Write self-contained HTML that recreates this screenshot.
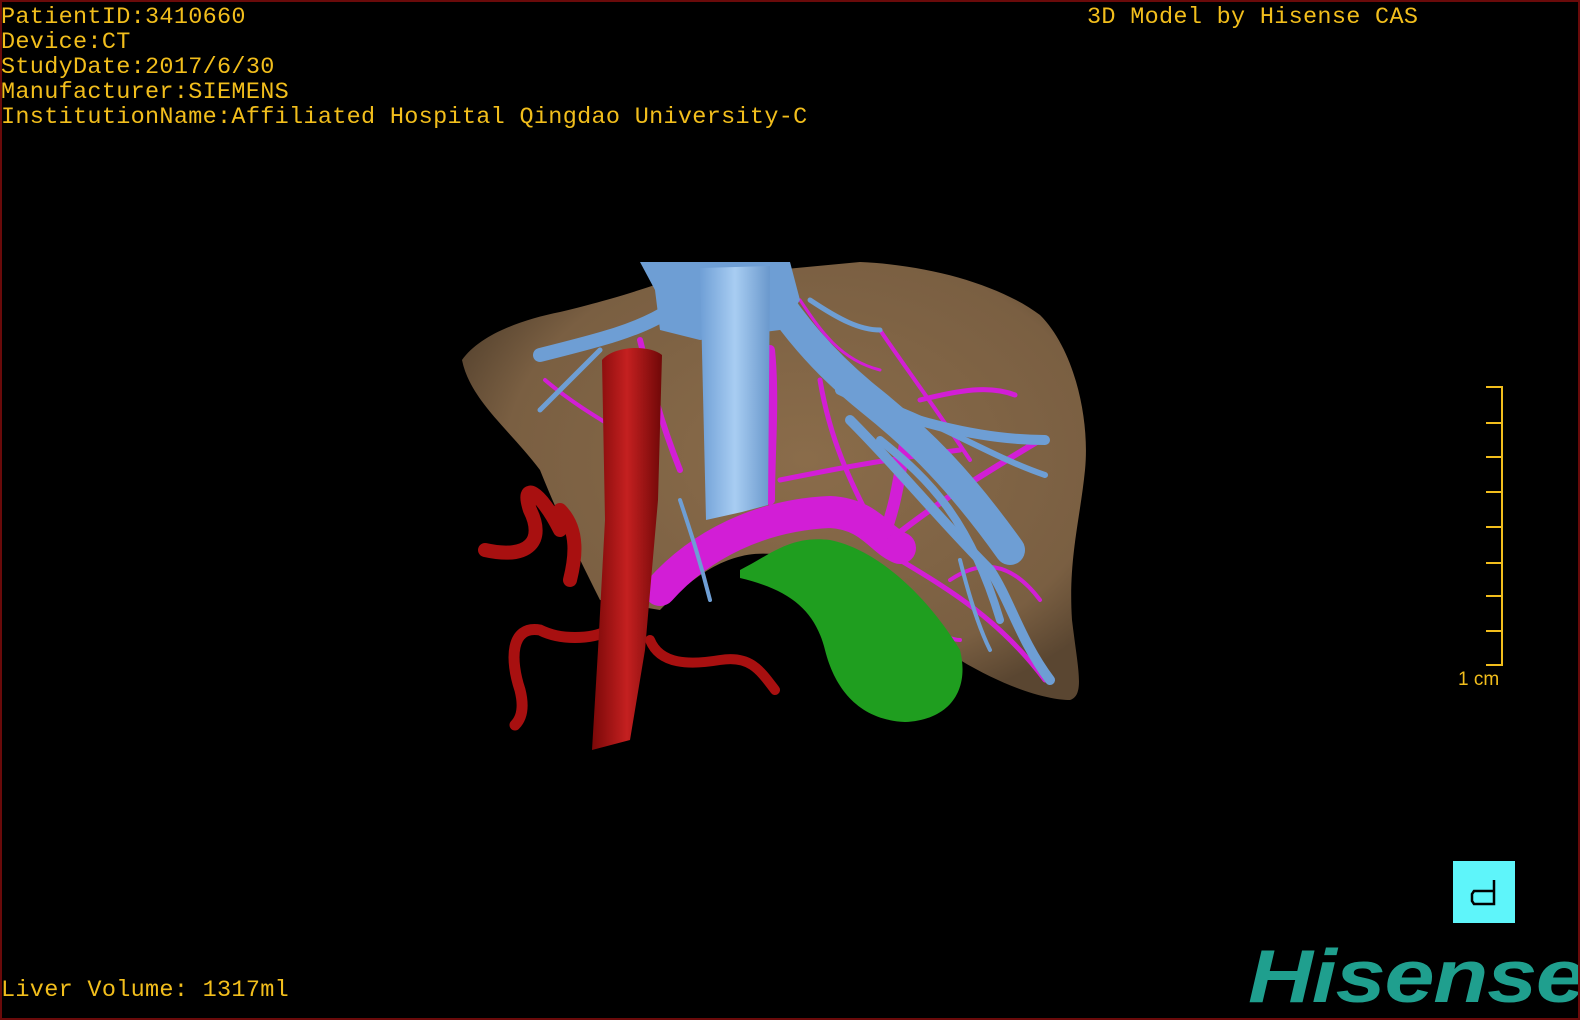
<!DOCTYPE html>
<html><head><meta charset="utf-8"><style>
html,body{margin:0;padding:0;background:#000;}
#f{position:relative;width:1580px;height:1020px;background:#000;overflow:hidden;box-sizing:border-box;border:2px solid #6a0a0a}
.t{position:absolute;font-family:"Liberation Mono",monospace;font-size:23.5px;color:#f2be1c;line-height:25px;white-space:pre;letter-spacing:0.3px}
.logo{position:absolute;left:1246px;top:931px;font-family:"Liberation Sans",sans-serif;font-weight:bold;font-style:italic;font-size:75px;color:#1f9f8e;letter-spacing:-1px;transform:scaleX(1.2);transform-origin:left}
</style></head><body><div id="f">
<div class="t" style="left:-1px;top:3px">PatientID:3410660
Device:CT
StudyDate:2017/6/30
Manufacturer:SIEMENS
InstitutionName:Affiliated Hospital Qingdao University-C</div>
<div class="t" style="left:1085px;top:3px">3D Model by Hisense CAS</div>
<div class="t" style="left:-1px;top:976px">Liver Volume: 1317ml</div>
<svg width="1580" height="1020" style="position:absolute;left:-2px;top:-2px">
<defs>
<radialGradient id="lv" cx="0.55" cy="0.45" r="0.6"><stop offset="0" stop-color="#8a6c4a"/><stop offset="0.8" stop-color="#7a5f42"/><stop offset="1" stop-color="#5a4631"/></radialGradient>
<linearGradient id="rd" x1="0" x2="1"><stop offset="0" stop-color="#7a0808"/><stop offset="0.5" stop-color="#c42020"/><stop offset="1" stop-color="#700808"/></linearGradient>
<linearGradient id="vc" x1="0" x2="1"><stop offset="0" stop-color="#6f9fd6"/><stop offset="0.5" stop-color="#a8cdf2"/><stop offset="1" stop-color="#6a98cc"/></linearGradient>
</defs>
<path d="M462 360 C480 335 520 320 560 312 C610 300 640 290 670 280 L860 262 C930 265 1000 285 1040 315 C1075 350 1090 420 1085 470 C1080 520 1068 560 1072 620 C1078 670 1085 695 1070 700 C1050 700 1010 690 960 660 C900 620 850 580 800 560 C740 540 700 570 660 610 L600 600 C580 560 560 520 540 470 C510 430 470 400 462 360Z" fill="url(#lv)"/>
<g stroke="#d21ed6" fill="none" stroke-linecap="round">
<path d="M660 590 C700 545 760 515 830 512 C870 514 880 540 900 548" stroke-width="32"/>
<path d="M880 545 C900 500 900 460 910 420" stroke-width="12"/>
<path d="M890 540 C940 500 990 470 1040 440" stroke-width="6"/>
<path d="M900 560 C950 590 1000 620 1045 680" stroke-width="5"/>
<path d="M870 520 C850 480 830 440 820 380" stroke-width="5"/>
<path d="M770 500 C770 450 775 400 770 350" stroke-width="10"/>
<path d="M680 470 C660 420 650 380 640 340" stroke-width="6"/>
<path d="M650 450 C620 430 580 410 545 380" stroke-width="4"/>
<path d="M780 480 C830 470 880 460 960 450" stroke-width="5"/>
<path d="M920 400 C960 390 990 385 1015 395" stroke-width="5"/>
<path d="M880 330 C900 360 930 400 970 460" stroke-width="4"/>
<path d="M950 580 C980 560 1010 560 1040 600" stroke-width="4"/>
<path d="M850 560 C880 600 940 640 960 640" stroke-width="4"/>
<path d="M800 300 C820 330 840 360 880 370" stroke-width="3"/>
</g>
<g stroke="#6e9ed4" fill="none" stroke-linecap="round">
<path d="M770 290 C790 320 820 360 870 400 C920 440 960 480 1010 550" stroke-width="30"/>
<path d="M840 390 C900 420 980 440 1045 440" stroke-width="10"/>
<path d="M850 420 C900 470 940 520 990 570 C1010 600 1020 640 1050 680" stroke-width="10"/>
<path d="M880 440 C930 480 970 520 1000 620" stroke-width="8"/>
<path d="M900 410 C950 430 1000 460 1045 475" stroke-width="6"/>
<path d="M670 310 C640 330 600 340 540 355" stroke-width="14"/>
<path d="M600 350 C580 370 560 390 540 410" stroke-width="5"/>
<path d="M680 500 C690 530 700 560 710 600" stroke-width="4"/>
<path d="M960 560 C970 600 980 630 990 650" stroke-width="4"/>
<path d="M810 300 C840 320 860 330 880 330" stroke-width="5"/>
</g>
<path d="M640 262 L790 262 L800 300 L780 330 L700 340 L660 330 L655 290Z" fill="#6e9ed4"/>
<path d="M700 268 L770 266 L768 505 L742 512 L706 520Z" fill="url(#vc)"/>
<path d="M740 570 C770 555 790 535 830 540 C880 550 930 600 960 650 C970 690 950 720 905 722 C860 720 835 690 825 650 C815 610 790 590 740 578Z" fill="#1f9e1f"/>
<g stroke="#a81010" fill="none" stroke-linecap="round">
<path d="M560 530 C540 490 520 480 530 510 C545 540 530 560 485 550" stroke-width="14"/>
<path d="M560 510 C580 530 575 560 570 580" stroke-width="14"/>
<path d="M610 630 C590 640 560 640 540 630 C510 625 510 660 520 690 C525 710 520 720 515 725" stroke-width="11"/>
<path d="M650 640 C660 665 690 665 720 660 C750 655 760 670 775 690" stroke-width="10"/>
</g>
<path d="M602 360 C615 345 650 345 662 355 L658 500 L645 650 L630 740 L592 750 L598 650 L605 520Z" fill="url(#rd)"/>
<g stroke="#f2be1c" stroke-width="2" fill="none">
<path d="M1486 387 H1502 V665 H1486"/>
<path d="M1486 423H1502M1486 457H1502M1486 492H1502M1486 527H1502M1486 563H1502M1486 596H1502M1486 631H1502"/>
</g>
<text x="1458" y="685" font-family="Liberation Sans,sans-serif" font-size="19" fill="#f2be1c">1 cm</text>
<rect x="1453" y="861" width="62" height="62" fill="#5ef5fa"/>
<path d="M1494 880 V904 H1474 L1472 901 V894 L1474 891 H1494" stroke="#000" stroke-width="2.5" fill="none"/>
</svg>
<div class="logo">Hisense</div>
</div></body></html>
